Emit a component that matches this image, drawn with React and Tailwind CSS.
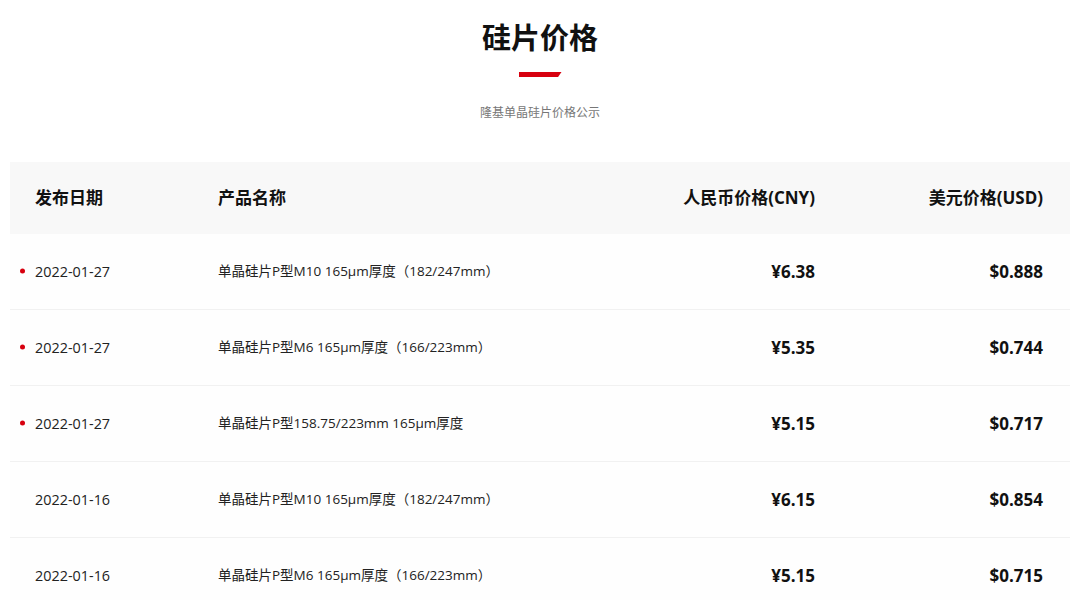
import React from 'react';

const rows = [
  { date: '2022-01-27', name: '单晶硅片P型M10 165μm厚度（182/247mm）', cny: '¥6.38', usd: '$0.888', isNew: true },
  { date: '2022-01-27', name: '单晶硅片P型M6 165μm厚度（166/223mm）', cny: '¥5.35', usd: '$0.744', isNew: true },
  { date: '2022-01-27', name: '单晶硅片P型158.75/223mm 165μm厚度', cny: '¥5.15', usd: '$0.717', isNew: true },
  { date: '2022-01-16', name: '单晶硅片P型M10 165μm厚度（182/247mm）', cny: '¥6.15', usd: '$0.854', isNew: false },
  { date: '2022-01-16', name: '单晶硅片P型M6 165μm厚度（166/223mm）', cny: '¥5.15', usd: '$0.715', isNew: false },
];

const font = { fontFamily: '"Open Sans", "Noto Sans CJK SC", sans-serif' };

export default function App() {
  return (
    <div className="w-[1080px] h-[600px] overflow-hidden bg-white text-[#222]" style={font}>
      {/* Title */}
      <div className="flex flex-col items-center pt-[16px]">
        <h1 className="text-[29px] leading-[44px] font-bold text-[#111]">硅片价格</h1>
        <div className="mt-[12px] w-[43px] h-[5px] bg-[#d7000f] [clip-path:polygon(0_0,100%_0,92%_100%,0_100%)]" />
        <p className="mt-[27px] text-[12px] leading-[18px] text-[#777]">隆基单晶硅片价格公示</p>
      </div>

      {/* Table */}
      <div className="mx-[10px] mt-[40px]">
        <div className="grid grid-cols-[208px_1fr_200px_255px] h-[72px] items-center bg-[#f8f8f8] text-[17px] font-bold text-[#111]">
          <div className="pl-[25px]">发布日期</div>
          <div>产品名称</div>
          <div className="text-right">人民币价格(CNY)</div>
          <div className="text-right pr-[27px]">美元价格(USD)</div>
        </div>
        {rows.map((r, i) => (
          <div
            key={i}
            className="grid grid-cols-[208px_1fr_200px_255px] h-[76px] items-center border-b border-[#f1f1f1] bg-[#fefefe]"
          >
            <div className="relative pl-[25px] text-[14.4px] text-[#222]">
              {r.isNew && <span className="absolute left-[10px] top-1/2 -translate-y-1/2 w-[5px] h-[5px] rounded-full bg-[#d7000f]" />}
              {r.date}
            </div>
            <div className="text-[13.5px] text-[#222]">{r.name}</div>
            <div className="text-right text-[17px] font-bold text-[#111]">{r.cny}</div>
            <div className="text-right pr-[27px] text-[17px] font-bold text-[#111]">{r.usd}</div>
          </div>
        ))}
      </div>
    </div>
  );
}
